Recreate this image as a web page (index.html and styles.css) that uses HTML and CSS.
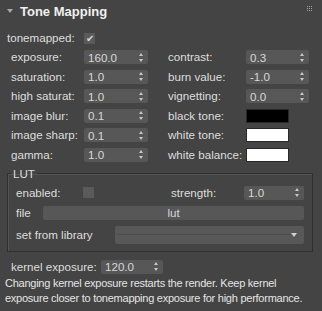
FILE: index.html
```html
<!DOCTYPE html>
<html lang="en">
<head>
<meta charset="UTF-8">
<title>Tone Mapping</title>
<link rel="stylesheet" href="styles.css">
</head>
<body>

<div class="panel">
  <div class="header">
    <span class="arrow"></span>
    <span class="title">Tone Mapping</span>
    <svg class="grip" width="6" height="6" viewBox="0 0 6 6">
      <rect x="0" y="0" width="1" height="1"/><rect x="2" y="0" width="1" height="1"/><rect x="4" y="0" width="1" height="1"/>
      <rect x="0" y="2" width="1" height="1"/><rect x="2" y="2" width="1" height="1"/><rect x="4" y="2" width="1" height="1"/>
      <rect x="0" y="4" width="1" height="1"/><rect x="2" y="4" width="1" height="1"/><rect x="4" y="4" width="1" height="1"/>
    </svg>
  </div>

  <div class="check-row">
    <span class="label wide">tonemapped:</span>
    <span class="check on">&#10004;</span>
  </div>

  <div class="params">
    <span class="label">exposure:</span>
    <span class="spin"><span class="val">160.0</span><span class="arrows"></span></span>
    <span class="label right">contrast:</span>
    <span class="spin"><span class="val">0.3</span><span class="arrows"></span></span>

    <span class="label">saturation:</span>
    <span class="spin"><span class="val">1.0</span><span class="arrows"></span></span>
    <span class="label right">burn value:</span>
    <span class="spin"><span class="val">-1.0</span><span class="arrows"></span></span>

    <span class="label">high saturat:</span>
    <span class="spin"><span class="val">1.0</span><span class="arrows"></span></span>
    <span class="label right">vignetting:</span>
    <span class="spin"><span class="val">0.0</span><span class="arrows"></span></span>

    <span class="label">image blur:</span>
    <span class="spin"><span class="val">0.1</span><span class="arrows"></span></span>
    <span class="label right">black tone:</span>
    <span class="swatch black"></span>

    <span class="label">image sharp:</span>
    <span class="spin"><span class="val">0.1</span><span class="arrows"></span></span>
    <span class="label right">white tone:</span>
    <span class="swatch"></span>

    <span class="label">gamma:</span>
    <span class="spin"><span class="val">1.0</span><span class="arrows"></span></span>
    <span class="label right">white balance:</span>
    <span class="swatch"></span>
  </div>

  <fieldset class="group">
    <legend>LUT</legend>
    <div class="lut-row first">
      <span class="label lead">enabled:</span>
      <span class="check"></span>
      <span class="label strength">strength:</span>
      <span class="spin small"><span class="val">1.0</span><span class="arrows"></span></span>
    </div>
    <div class="lut-row">
      <span class="label file-label">file</span>
      <span class="button">lut</span>
    </div>
    <div class="lut-row">
      <span class="label lib-label">set from library</span>
      <span class="dropdown"><span class="line"></span><span class="drop-arrow"></span></span>
    </div>
  </fieldset>

  <div class="kernel-row">
    <span class="label">kernel exposure:</span>
    <span class="spin"><span class="val">120.0</span><span class="arrows"></span></span>
  </div>

  <p class="note">Changing kernel exposure restarts the render. Keep kernel exposure closer to tonemapping exposure for high performance.</p>
</div>

</body>
</html>
```

FILE: styles.css
```css
body {
  margin: 0;
  background-color: #444444;
  font-family: "Liberation Sans", Arial, sans-serif;
  font-size: 11.6px;
  color: #dedede;
}
.panel {
  width: 322px;
  height: 311px;
  box-sizing: border-box;
}
.header {
  display: flex;
  align-items: center;
  height: 22px;
  padding: 0 0 0 7px;
  position: relative;
}
.arrow {
  width: 0;
  height: 0;
  border-left: 3px solid transparent;
  border-right: 3px solid transparent;
  border-top: 4px solid #a8a8a8;
  margin-right: 7px;
}
.title {
  font-weight: bold;
  font-size: 13px;
  color: #f0f0f0;
}
.grip {
  position: absolute;
  right: 9px;
  top: 6px;
  fill: #a0a0a0;
}
.label {
  white-space: nowrap;
  line-height: 14px;
}
.check-row {
  display: flex;
  align-items: center;
  height: 14px;
  margin-top: 9px;
  padding-left: 7px;
}
.check-row .wide {
  width: 77px;
}
.check {
  width: 11px;
  height: 11px;
  background: #5a5a5a;
  box-sizing: border-box;
  font-size: 10px;
  line-height: 11px;
  text-align: center;
  color: #d8d8d8;
}
.params {
  display: grid;
  grid-template-columns: 73px 64px 98px 63px;
  grid-auto-rows: 14px;
  row-gap: 5.6px;
  margin-top: 5px;
  padding-left: 11px;
  align-items: center;
}
.params .right {
  padding-left: 20px;
}
.spin {
  display: flex;
  align-items: center;
  justify-content: space-between;
  height: 14px;
  background: #575757;
  border-radius: 2px;
  padding: 0 4px 0 4px;
  box-sizing: border-box;
  color: #d8d8d8;
}
.arrows {
  width: 5px;
  height: 9px;
  position: relative;
}
.arrows::before, .arrows::after {
  content: "";
  position: absolute;
  left: 0;
  border-left: 2.5px solid transparent;
  border-right: 2.5px solid transparent;
}
.arrows::before {
  top: 0;
  border-bottom: 3px solid #c8c8c8;
}
.arrows::after {
  bottom: 0;
  border-top: 3px solid #c8c8c8;
}
.swatch {
  width: 43px;
  height: 14px;
  background: #ffffff;
  border: 1px solid #2a2a2a;
  box-sizing: border-box;
}
.swatch.black {
  background: #000000;
}
.group {
  margin: 6px 9px 0 7px;
  padding: 0 8px 0 0;
  border: 1px solid #2f2f2f;
  box-shadow: 1px 1px 0 #555 inset;
  height: 84px;
  box-sizing: border-box;
}
.group legend {
  padding: 0 2px;
  margin-left: 3px;
  line-height: 12px;
}
.lut-row {
  display: flex;
  align-items: center;
  padding-left: 8px;
  margin-top: 6px;
}
.lut-row.first {
  margin-top: 6px;
}
.lut-row .lead {
  width: 67px;
}
.lut-row .strength {
  margin-left: 77px;
  width: 73px;
}
.spin.small {
  width: 60px;
}
.lut-row .file-label {
  width: 27px;
}
.button {
  flex: 1;
  height: 14px;
  background: #575757;
  border-radius: 2px;
  line-height: 14px;
  text-align: center;
  color: #d8d8d8;
}
.lut-row .lib-label {
  width: 99px;
}
.dropdown {
  flex: 1;
  height: 18px;
  background: #585858;
  border-radius: 2px;
  position: relative;
}
.dropdown .line {
  position: absolute;
  left: 2px;
  right: 14px;
  top: 8px;
  border-top: 1px solid #4c4c4c;
}
.drop-arrow {
  position: absolute;
  right: 7px;
  top: 7px;
  border-left: 3px solid transparent;
  border-right: 3px solid transparent;
  border-top: 4px solid #d0d0d0;
}
.kernel-row {
  display: flex;
  align-items: center;
  padding-left: 11px;
  margin-top: 8px;
}
.kernel-row .label {
  width: 90px;
}
.kernel-row .spin {
  width: 62px;
}
.note {
  margin: 2px 0 0 5px;
  line-height: 15px;
  font-size: 11px;
  letter-spacing: -0.25px;
  color: #e4e4e4;
}
```
